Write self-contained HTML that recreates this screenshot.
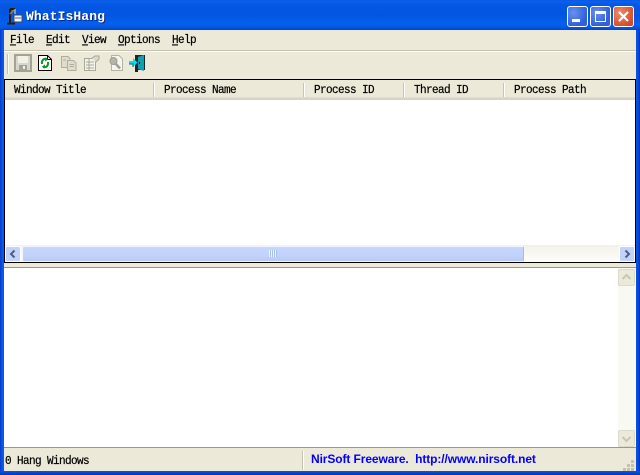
<!DOCTYPE html>
<html><head><meta charset="utf-8"><style>
html,body{margin:0;padding:0;background:#fff}
#w{position:relative;width:640px;height:475px;overflow:hidden;background:#ece9d8}
#w div,#w svg{position:absolute}
.t{font:11px/12px "Liberation Mono",monospace;letter-spacing:-.6px;color:#000;white-space:pre;transform:scaleY(1.12);transform-origin:0 50%;-webkit-text-stroke:.2px #000}
.t u{text-decoration:underline}
.sep{width:1px;height:14px;top:83px;background:#c7c5b2;box-shadow:1px 0 0 #fff}
.xp{border:1px solid #fff;border-radius:3px;box-sizing:border-box}
</style></head><body><div id="w">
<div style="left:0;top:0;width:640px;height:30px;background:linear-gradient(#0a5ae0 0,#0a60f0 2px,#0458e4 4px,#0255e0 14px,#0461ee 24px,#0354e0 28px,#0244c8 30px)"></div>
<div style="left:0;top:30px;width:4px;height:445px;background:linear-gradient(90deg,#0839c8,#0855e5 50%,#0a5cf0)"></div>
<div style="left:636px;top:30px;width:4px;height:445px;background:linear-gradient(90deg,#0a55e5,#0846d8 60%,#0430b0)"></div>
<div style="left:0;top:471px;width:640px;height:4px;background:linear-gradient(#0a55e5,#0440c8 70%,#0430b0)"></div>

<svg style="left:6px;top:7px" width="18" height="18" viewBox="0 0 18 18">
<path d="M4 2V16M1 16.500H9M4 2H9" stroke="#2a1a08" stroke-width="2" fill="none"/>
<path d="M4 7L8 3" stroke="#a08030" stroke-width="1.500"/>
<path d="M9 2V7" stroke="#ddd" stroke-width="1"/>
<rect x="8" y="8" width="8" height="7" fill="#f4f4f4" stroke="#445" stroke-width="1"/>
<rect x="9" y="10" width="6" height="2" fill="#aac"/>
</svg>
<div style="left:26px;top:9px;font:bold 13px/15px 'Liberation Mono',monospace;letter-spacing:.1px;color:#0a2a90;white-space:pre;transform:translate(1px,1px)">WhatIsHang</div>
<div style="left:26px;top:9px;font:bold 13px/15px 'Liberation Mono',monospace;letter-spacing:.1px;color:#fff;white-space:pre">WhatIsHang</div>

<div class="xp" style="left:567px;top:6px;width:21px;height:21px;background:radial-gradient(circle at 30% 30%,#6a90ee,#2f5fdc 70%,#3a62d8)"></div>
<div style="left:572px;top:19px;width:8px;height:3px;background:#fff"></div>
<div class="xp" style="left:590px;top:6px;width:21px;height:21px;background:radial-gradient(circle at 30% 30%,#6a90ee,#2f5fdc 70%,#3a62d8)"></div>
<div style="left:595px;top:11px;width:11px;height:11px;box-sizing:border-box;border:1px solid #fff;border-top-width:3px"></div>
<div class="xp" style="left:613px;top:6px;width:21px;height:21px;background:radial-gradient(circle at 30% 30%,#ee8a68,#d8502c 70%,#c84020)"></div>
<svg style="left:613px;top:6px" width="21" height="21"><path d="M6 6L15 15M15 6L6 15" stroke="#fff" stroke-width="2.200"/></svg>

<div class="t" style="left:10px;top:35px"><u>F</u>ile</div>
<div class="t" style="left:46px;top:35px"><u>E</u>dit</div>
<div class="t" style="left:82px;top:35px"><u>V</u>iew</div>
<div class="t" style="left:118px;top:35px"><u>O</u>ptions</div>
<div class="t" style="left:172px;top:35px"><u>H</u>elp</div>

<div style="left:4px;top:50px;width:632px;height:1px;background:#c5c2b0"></div>
<div style="left:4px;top:51px;width:632px;height:1px;background:#fff"></div>
<div style="left:7px;top:54px;width:1px;height:20px;background:#c5c2b0;box-shadow:1px 0 0 #fff"></div>

<svg style="left:14px;top:54px" width="18" height="18"><rect x="1" y="1" width="16" height="16" fill="#d8d6c8" stroke="#a3a295" stroke-width="2"/><rect x="4" y="2" width="10" height="7" fill="#f2f1e8"/><rect x="5" y="11" width="8" height="5" fill="#a3a295"/><rect x="9" y="12" width="2" height="3" fill="#eee"/></svg>
<svg style="left:37px;top:54px" width="16" height="18"><path d="M1.500 1.500H10.500L14.500 5.500V16.500H1.500Z" fill="#fff" stroke="#000"/><path d="M10.500 1.500V5.500H14.500" fill="none" stroke="#000"/><path d="M10 5C6 4 4.500 7 5 10" fill="none" stroke="#0a9a20" stroke-width="2"/><path d="M8 3.500L11 5.500L8 7.500Z" fill="#0a9a20"/><path d="M6 13C10 14 11.500 11 11 8" fill="none" stroke="#0a9a20" stroke-width="2"/><path d="M8 10.500L5 12.500L8 14.500Z" fill="#0a9a20"/></svg>
<svg style="left:60px;top:55px" width="18" height="17"><path d="M1.500 1.500H8L10 3.500V12.500H1.500Z" fill="#dedccd" stroke="#b0ae9f"/><path d="M7.500 5.500H13.500L16 8V15.500H7.500Z" fill="#dedccd" stroke="#b0ae9f"/><path d="M9.500 9.500H14M9.500 11.500H14M3 5H6" stroke="#b0ae9f"/></svg>
<svg style="left:83px;top:54px" width="18" height="18"><path d="M1.500 4.500H12.500V16.500H1.500Z" fill="#f4f3ea" stroke="#aaa89a"/><path d="M3 8H11M3 11H11M3 14H11M6 5V16" stroke="#aaa89a"/><path d="M9 4L12 2H16V5L13 8" fill="#dcdacb" stroke="#aaa89a"/></svg>
<svg style="left:107px;top:54px" width="18" height="18"><path d="M4.500 1.500H12L15.500 5V16.500H4.500Z" fill="#f6f5ee" stroke="#b5b3a5"/><circle cx="6.500" cy="7" r="3.500" fill="#b8b6a8" stroke="#9f9d90"/><path d="M8.500 9.500L13 14.500" stroke="#a3a195" stroke-width="2.500"/></svg>
<svg style="left:129px;top:54px" width="18" height="18"><path d="M6 1H16V16H6Z" fill="#1a2a2a"/><path d="M9 3L15 1V17L9 15Z" fill="#12a0b0"/><rect x="10" y="8" width="1" height="2" fill="#003"/><path d="M0 7H4V4L8.500 8.500L4 13V10H0Z" fill="#00e0f0"/><path d="M4 13V10H0" fill="none" stroke="#007088"/><path d="M6 15H9V18H6Z" fill="#222"/></svg>

<div style="left:4px;top:79px;width:632px;height:184px;box-sizing:border-box;border:1px solid #000;background:#fff"></div>
<div style="left:5px;top:80px;width:630px;height:17px;background:#ece9d8"></div>
<div style="left:5px;top:97px;width:630px;height:3px;background:linear-gradient(#e2dfce,#d4d0bf)"></div>
<div class="t" style="left:14px;top:85px">Window Title</div>
<div class="t" style="left:164px;top:85px">Process Name</div>
<div class="t" style="left:314px;top:85px">Process ID</div>
<div class="t" style="left:414px;top:85px">Thread ID</div>
<div class="t" style="left:514px;top:85px">Process Path</div>
<div class="sep" style="left:153px"></div>
<div class="sep" style="left:303px"></div>
<div class="sep" style="left:403px"></div>
<div class="sep" style="left:503px"></div>

<div style="left:5px;top:245px;width:630px;height:17px;background:linear-gradient(#f2f1ea,#fdfdfa)"></div>
<div style="left:5px;top:246px;width:16px;height:16px;box-sizing:border-box;border:1px solid #fff;border-radius:2px;background:#c2d2f8"></div>
<svg style="left:5px;top:246px" width="16" height="16"><path d="M9.500 4.500L6 8L9.500 11.500" fill="none" stroke="#4d6185" stroke-width="2"/></svg>
<div style="left:619px;top:246px;width:16px;height:16px;box-sizing:border-box;border:1px solid #fff;border-radius:2px;background:#c2d2f8"></div>
<svg style="left:619px;top:246px" width="16" height="16"><path d="M6.500 4.500L10 8L6.500 11.500" fill="none" stroke="#4d6185" stroke-width="2"/></svg>
<div style="left:22px;top:246px;width:502px;height:16px;box-sizing:border-box;border:1px solid #f0f4ff;border-right:1px solid #a8bce8;border-radius:2px;background:linear-gradient(#c8d6fc,#c2d2fa 60%,#b8caf5)"></div>
<div style="left:269px;top:250px;width:8px;height:7px;background:repeating-linear-gradient(90deg,#eef4ff 0,#eef4ff 1px,#a8c0ec 1px,#a8c0ec 2px)"></div>

<div style="left:4px;top:267px;width:632px;height:180px;background:#fff"></div>
<div style="left:4px;top:267px;width:632px;height:1px;background:#7f9db9"></div>
<div style="left:4px;top:447px;width:632px;height:1px;background:#7f9db9"></div>
<div style="left:618px;top:268px;width:18px;height:179px;background:#f9f9f4"></div>
<div style="left:618px;top:269px;width:17px;height:17px;box-sizing:border-box;border:1px solid #dcdacb;border-radius:2px;background:#ece9d8"></div>
<svg style="left:618px;top:269px" width="17" height="17"><path d="M4.500 10L8.500 6L12.500 10" fill="none" stroke="#c8c6b6" stroke-width="2"/></svg>
<div style="left:618px;top:430px;width:17px;height:17px;box-sizing:border-box;border:1px solid #dcdacb;border-radius:2px;background:#ece9d8"></div>
<svg style="left:618px;top:430px" width="17" height="17"><path d="M4.500 7L8.500 11L12.500 7" fill="none" stroke="#c8c6b6" stroke-width="2"/></svg>

<div class="t" style="left:5px;top:456px">0 Hang Windows</div>
<div style="left:302px;top:451px;width:1px;height:19px;background:#c5c2b0;box-shadow:1px 0 0 #fff"></div>
<div style="left:311px;top:452px;font:bold 12px/14px 'Liberation Sans',sans-serif;letter-spacing:-.1px;color:#0000ff;white-space:pre">NirSoft Freeware.  http://www.nirsoft.net</div>
<svg style="left:622px;top:458px" width="14" height="13" fill="#c5c2b0"><rect x="9" y="2" width="3" height="3"/><rect x="5" y="6" width="3" height="3"/><rect x="9" y="6" width="3" height="3"/><rect x="1" y="10" width="3" height="3"/><rect x="5" y="10" width="3" height="3"/><rect x="9" y="10" width="3" height="3"/></svg>
</div></body></html>
